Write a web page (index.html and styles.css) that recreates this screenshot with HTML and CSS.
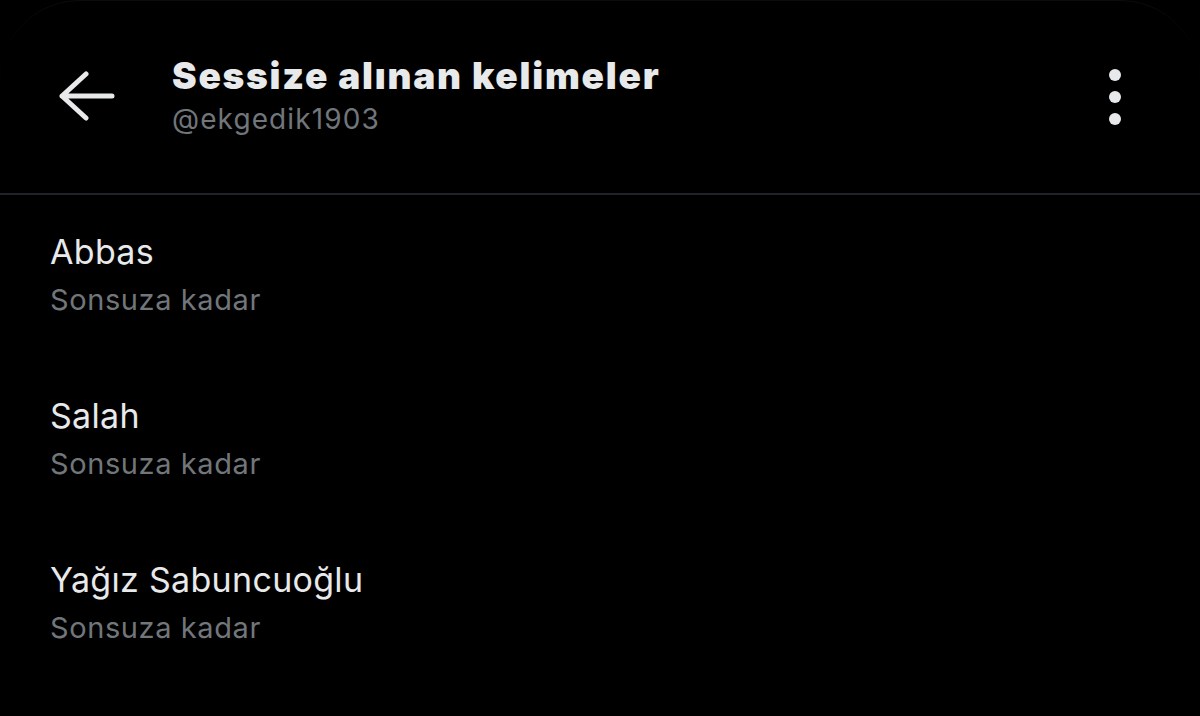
FILE: index.html
```html
<!DOCTYPE html>
<html lang="tr">
<head>
<meta charset="utf-8">
<link rel="stylesheet" href="styles.css">
</head>
<body>
<div class="screen">
  <header class="header">
    <div class="back">
      <svg width="60" height="52" viewBox="0 0 60 52"><path d="M27 4 L3 26 L27 48 M3 26 H53" fill="none" stroke="#e7e9ea" stroke-width="5" stroke-linecap="round" stroke-linejoin="round"/></svg>
    </div>
    <div class="titles">
      <div class="title">Sessize alınan kelimeler</div>
      <div class="handle">@ekgedik1903</div>
    </div>
    <div class="more">
      <span class="dot"></span><span class="dot"></span><span class="dot"></span>
    </div>
  </header>
  <ul class="list">
    <li class="item"><div class="word">Abbas</div><div class="dur">Sonsuza kadar</div></li>
    <li class="item"><div class="word">Salah</div><div class="dur">Sonsuza kadar</div></li>
    <li class="item"><div class="word">Yağız Sabuncuoğlu</div><div class="dur">Sonsuza kadar</div></li>
  </ul>
</div>
</body>
</html>
```
FILE: styles.css
```css
html, body { margin: 0; padding: 0; background: #000; }
body { width: 1200px; height: 716px; overflow: hidden; font-family: "Inter", "Liberation Sans", sans-serif; color: #e7e9ea; }
.screen { height: 716px; border-radius: 80px 80px 0 0; border-top: 1px solid #0b0b0b; box-sizing: border-box; }
.header { display: flex; align-items: flex-start; height: 192px; border-bottom: 2px solid #202327; }
.back { width: 60px; height: 52px; margin: 69px 0 0 59px; }
.titles { margin: 51px 0 0 53px; flex: 1; }
.title { font-size: 37px; font-weight: 900; line-height: 48px; letter-spacing: 1.75px; }
.handle { font-size: 28px; line-height: 36px; color: #71767b; letter-spacing: 1.1px; margin-top: 1px; }
.more { display: flex; flex-direction: column; gap: 10px; margin: 68px 79px 0 0; }
.dot { width: 12px; height: 12px; border-radius: 50%; background: #e7e9ea; display: block; }
.list { list-style: none; margin: 0; padding: 0; }
.item { padding: 35px 50px 0; height: 129px; }
.word { font-size: 34px; line-height: 44px; letter-spacing: 0.3px; }
.dur { font-size: 29px; line-height: 40px; color: #71767b; letter-spacing: 0.6px; margin-top: 6px; }
```
